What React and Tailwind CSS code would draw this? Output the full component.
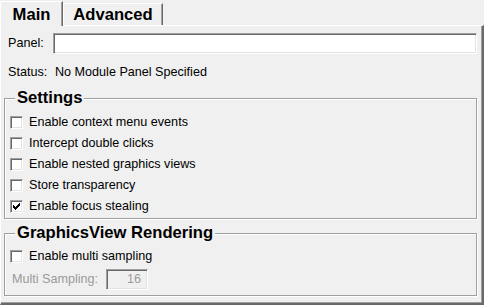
import React from 'react';

const SETTINGS = [
  { label: 'Enable context menu events', checked: false },
  { label: 'Intercept double clicks', checked: false },
  { label: 'Enable nested graphics views', checked: false },
  { label: 'Store transparency', checked: false },
  { label: 'Enable focus stealing', checked: true },
];

// classic win check glyph, one 3px-tall bar per column
const CHECK_COLS = [2, 3, 4, 3, 2, 1, 0];

function CheckBox({ label, checked }) {
  return (
    <div className="flex items-center h-[21px]">
      <span className="ml-[5px] w-[13px] h-[13px] shrink-0 bg-white border border-t-[#a0a0a0] border-l-[#a0a0a0] border-r-white border-b-white shadow-[inset_1px_1px_0_#696969,inset_-1px_-1px_0_#e3e3e3] flex items-center justify-center">
        {checked && (
          <svg width="7" height="7" viewBox="0 0 7 7" shapeRendering="crispEdges">
            {CHECK_COLS.map((y, x) => (
              <rect key={x} x={x} y={y} width="1" height="3" fill="#000" />
            ))}
          </svg>
        )}
      </span>
      <span className="ml-[6px] whitespace-nowrap">{label}</span>
    </div>
  );
}

function GroupBox({ title, className = '', children }) {
  return (
    <fieldset className={`mx-0 ml-[3px] mr-[5px] border border-[#a0a0a0] shadow-[1px_1px_0_#fff,inset_1px_1px_0_#fff] ${className}`}>
      <legend className="ml-[10px] px-[2px] bg-[#f0f0f0] font-bold text-[16.6px] leading-[20px]">{title}</legend>
      {children}
    </fieldset>
  );
}

export default function App() {
  return (
    <div className="w-[484px] h-[305px] bg-[#f0f0f0] text-black text-[12.6px] leading-[15px] font-['Liberation_Sans',Arial,sans-serif] flex flex-col overflow-hidden">
      {/* Tabs */}
      <div className="h-[25px] flex items-end shrink-0">
        <div className="relative z-10 mb-[-1px] h-[25px] w-[63px] bg-[#f0f0f0] border-t border-l border-white border-r border-r-[#696969] shadow-[inset_-1px_0_0_#a0a0a0] flex items-center justify-center font-bold text-[16.6px]">
          Main
        </div>
        <div className="h-[22px] w-[100px] border-t border-l border-white border-r border-r-[#696969] shadow-[inset_-1px_0_0_#a0a0a0] flex items-center justify-center font-bold text-[16.6px]">
          Advanced
        </div>
      </div>

      {/* Pane */}
      <div className="flex-1 flex flex-col border-t border-l border-white border-r-2 border-b-2 border-r-[#696969] border-b-[#696969] shadow-[inset_-1px_-1px_0_#a0a0a0]">
        <div className="mt-[7px] flex items-center mr-[5px]">
          <span className="ml-[7px] w-[45px] shrink-0">Panel:</span>
          <div className="flex-1 h-[21px] bg-white border border-t-[#a0a0a0] border-l-[#a0a0a0] border-r-white border-b-white shadow-[inset_1px_1px_0_#696969,inset_-1px_-1px_0_#e3e3e3]" />
        </div>

        <div className="mt-[11px] flex items-center h-[15px]">
          <span className="ml-[7px] w-[47px] shrink-0">Status:</span>
          <span>No Module Panel Specified</span>
        </div>

        <GroupBox title="Settings" className="mt-[8px] pb-[1px]">
          <div className="pt-[4px]">
            {SETTINGS.map((s) => (
              <CheckBox key={s.label} label={s.label} checked={s.checked} />
            ))}
          </div>
        </GroupBox>

        <GroupBox title="GraphicsView Rendering" className="mt-[4px] pb-[5px]">
          <div className="pt-[3px]">
            <CheckBox label="Enable multi sampling" checked={false} />
            <div className="mt-[2px] flex items-center">
              <span className="ml-[7px] w-[94px] shrink-0 text-[#9a9a9a]">Multi Sampling:</span>
              <div className="w-[42px] h-[21px] border border-t-[#a0a0a0] border-l-[#a0a0a0] border-r-white border-b-white shadow-[inset_1px_1px_0_#696969,inset_-1px_-1px_0_#e3e3e3] flex items-center justify-end pr-[6px] text-[#9a9a9a]">
                16
              </div>
            </div>
          </div>
        </GroupBox>
      </div>
    </div>
  );
}
